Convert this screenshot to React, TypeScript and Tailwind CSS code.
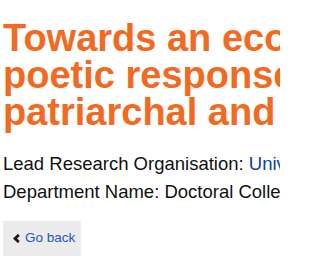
export default function App() {
  return (
    <div className="w-[280px] h-[280px] overflow-hidden bg-white" style={{ fontFamily: '"Liberation Sans", Arial, sans-serif' }}>
      <div className="w-[600px] pl-[3px] pt-[20px]">
        <h1 className="text-[38px] leading-[37px] font-bold text-[#f26a21] whitespace-nowrap">
          <span className="block">Towards an ecofeminist</span>
          <span className="block">poetic response to the</span>
          <span className="block">patriarchal and capitalist</span>
        </h1>
        <div className="mt-[19px] text-[18.5px] leading-[27.75px] text-[#111] whitespace-nowrap">
          <p>
            Lead Research Organisation: <a className="text-[#0b44a3]">University of Nottingham</a>
          </p>
          <p>Department Name: Doctoral College</p>
        </div>
        <div className="mt-[15px]">
          <a className="inline-flex items-center gap-[5px] bg-[#ebebeb] h-[35px] w-[78px] pl-[10px] text-[13.5px] leading-[20px] text-[#1a55c9]">
            <svg width="7" height="9" viewBox="0 0 7 9" className="shrink-0">
              <path d="M5.8 0.9 L2 4.5 L5.8 8.1" stroke="#1a1a1a" strokeWidth="2.8" fill="none" strokeLinejoin="miter" strokeLinecap="butt" />
            </svg>
            Go back
          </a>
        </div>
      </div>
    </div>
  );
}
